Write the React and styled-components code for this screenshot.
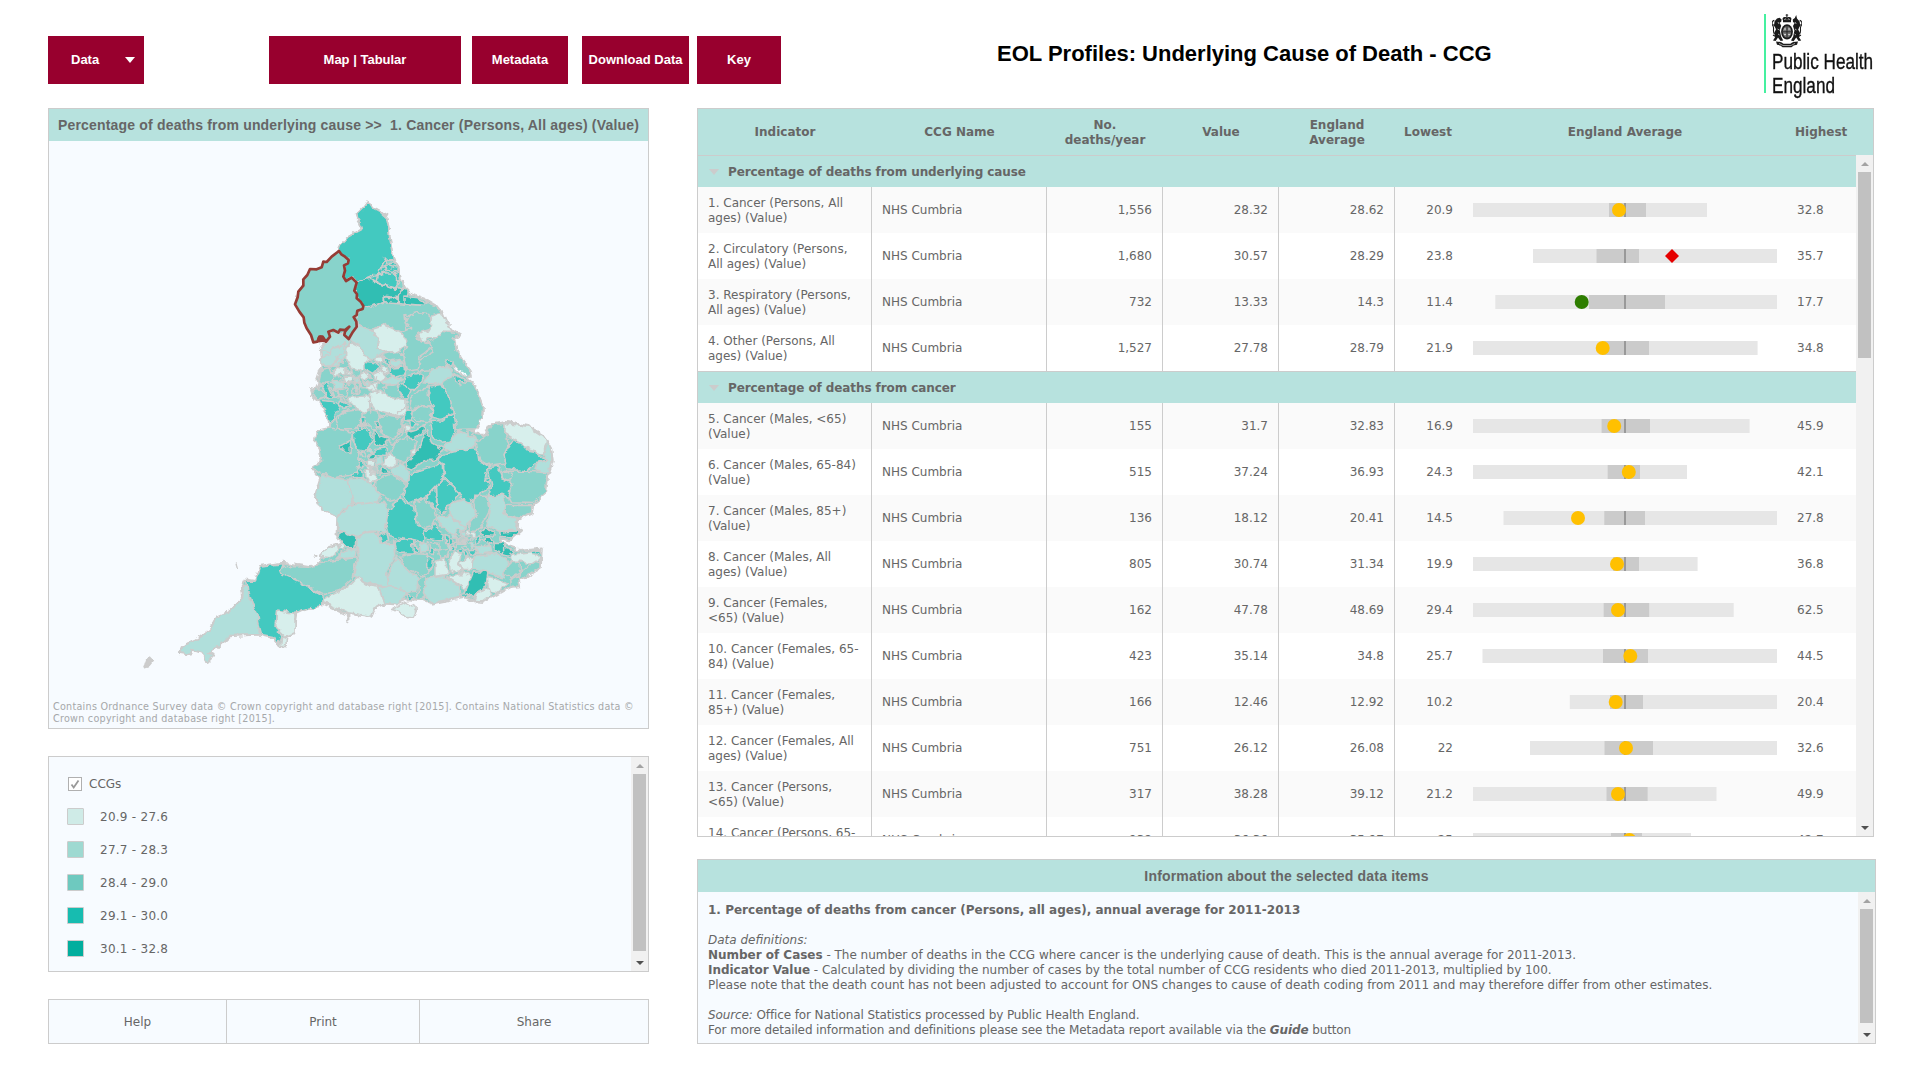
import React from "react";
import styled, { createGlobalStyle } from "styled-components";

const LINE = "#cccccc";
const TEAL = "#b7e2de";
const PALE = "#f7fbff";
const INK = "#666666";

const Global = createGlobalStyle`
  * { box-sizing: border-box; }
  html, body { margin: 0; background: #fff; }
  body {
    font-family: "DejaVu Sans", Verdana, sans-serif;
    font-size: 12px;
    line-height: 15px;
    color: ${INK};
    overflow: hidden;
  }
`;

const Page = styled.div`
  width: 1920px;
  height: 1080px;
  padding: 0 44px 0 48px;
  overflow: hidden;
`;

const TopBar = styled.header`
  display: flex;
  height: 108px;
`;

const Button = styled.button`
  display: flex;
  flex: none;
  align-items: center;
  justify-content: ${(p) => (p.$menu ? "space-between" : "center")};
  width: ${(p) => p.$w}px;
  height: 48px;
  margin: 36px 0 0 ${(p) => p.$gap || 0}px;
  padding: ${(p) => (p.$menu ? "0 9px 0 23px" : "0")};
  border: 0;
  background: #98002e;
  color: #fff;
  font: bold 13px/16px "Liberation Sans", Arial, sans-serif;
  white-space: nowrap;
`;

const Caret = styled.span`
  border: solid transparent;
  border-width: 6px 5.5px 0;
  border-top-color: ${(p) => p.$color || "#fff"};
`;

const Title = styled.h1`
  flex: none;
  margin: 42px 0 0 216px;
  width: 496px;
  font: bold 22px/24px "Liberation Sans", Arial, sans-serif;
  color: #000;
  white-space: nowrap;
`;

const Logo = styled.div`
  flex: none;
  width: 110px;
  height: 79px;
  margin: 14px 0 0 271px;
  padding-left: 6px;
  border-left: 2px solid #45f0a0;
  color: #111;
`;

const LogoText = styled.div`
  width: 128px;
  margin-top: 2px;
  font: 22px/24px "Liberation Sans", Arial, sans-serif;
  -webkit-text-stroke: 0.35px #111;
  transform: scaleX(0.78);
  transform-origin: 0 0;
  white-space: nowrap;
`;

const Columns = styled.main`
  display: grid;
  grid-template-columns: 601px 1179px;
  column-gap: 48px;
`;

const Column = styled.div`
  display: flex;
  flex-direction: column;
`;

const Panel = styled.section`
  display: flex;
  flex-direction: column;
  width: ${(p) => p.$w}px;
  height: ${(p) => p.$h}px;
  margin-bottom: ${(p) => p.$gap || 0}px;
  border: 1px solid ${LINE};
  background: ${(p) => p.$bg || PALE};
  overflow: hidden;
`;

const PanelHead = styled.h2`
  flex: none;
  height: 32px;
  margin: 0;
  background: ${TEAL};
  font: bold 14px/33px "Liberation Sans", Arial, sans-serif;
  letter-spacing: 0.18px;
  text-align: center;
  white-space: pre;
`;

const MapArea = styled.div`
  flex: 1;
  svg { display: block; }
`;

const Credit = styled.p`
  margin: 0 0 3px 4px;
  font-size: 9.6px;
  line-height: 12px;
  letter-spacing: 0.265px;
  color: #a6a8aa;
  white-space: pre;
`;

const Scroller = styled.div`
  display: flex;
  flex: 1;
  min-height: 0;
`;

const ScrollBody = styled.div`
  flex: 1;
  min-width: 0;
  overflow: hidden;
`;

const Track = styled.div`
  display: flex;
  flex-direction: column;
  align-items: center;
  flex: none;
  width: 17px;
  background: #f1f1f1;
`;

const Arrow = styled.i`
  flex: none;
  height: 17px;
  display: flex;
  align-items: center;
  &::before {
    content: "";
    border: solid transparent;
    border-width: ${(p) => (p.$down ? "4px 4px 0" : "0 4px 4px")};
    ${(p) => (p.$down ? "border-top-color: #505050" : "border-bottom-color: #a3a3a3")};
  }
`;

const Thumb = styled.div`
  flex: none;
  width: 13px;
  height: ${(p) => p.$h}px;
  background: #c1c1c1;
`;

const Spacer = styled.div`
  flex: 1;
`;

const LegendHead = styled.div`
  display: flex;
  align-items: center;
  height: 14px;
  margin: 20px 0 17px 19px;
  gap: 7px;
  svg { display: block; }
`;

const LegendList = styled.div`
  display: flex;
  flex-direction: column;
  gap: 16px;
  padding-left: 18px;
`;

const LegendItem = styled.div`
  display: flex;
  align-items: center;
  height: 17px;
  gap: 16px;
  line-height: 17px;
  letter-spacing: 0.26px;
`;

const Range = styled.span`
  padding-top: 2px;
`;

const Swatch = styled.span`
  width: 17px;
  height: 17px;
  border: 1px solid ${LINE};
  border-radius: 1px;
  background: ${(p) => p.$color};
`;

const Actions = styled.nav`
  display: grid;
  grid-template-columns: 177px 193px 229px;
  height: 45px;
  border: 1px solid ${LINE};
  background: ${PALE};
`;

const Action = styled.a`
  padding-top: 1px;
  line-height: 42px;
  text-align: center;
  border-left: ${(p) => (p.$first ? "0" : `1px solid ${LINE}`)};
`;

const GRID = "174px 175px 116px 116px 116px 78px 304px 1fr";

const HeadRow = styled.div`
  display: grid;
  grid-template-columns: ${GRID};
  align-items: center;
  flex: none;
  height: 46px;
  padding-top: 1px;
  background: ${TEAL};
  font-weight: bold;
  text-align: center;
`;

const HeadCell = styled.div`
  padding: ${(p) => p.$pad || "0"};
  text-align: ${(p) => p.$align || "center"};
`;

const GroupRow = styled.div`
  display: flex;
  align-items: center;
  gap: 9px;
  height: 32px;
  padding: 1px 0 0 11px;
  border-top: 1px solid ${LINE};
  background: ${TEAL};
  font-weight: bold;
  letter-spacing: -0.09px;
`;

const Row = styled.div`
  display: grid;
  grid-template-columns: ${GRID};
  height: 46px;
  background: ${(p) => (p.$odd ? "#fafafa" : "#ffffff")};
`;

const Cell = styled.div`
  display: flex;
  align-items: center;
  justify-content: ${(p) => (p.$right ? "flex-end" : "flex-start")};
  padding: ${(p) => (p.$two ? 2 : 0)}px ${(p) => (p.$line ? 10 : 20)}px 0 ${(p) => p.$left || 10}px;
  border-right: ${(p) => (p.$line ? `1px solid ${LINE}` : "0")};
  white-space: pre;
`;

const BarCell = styled.div`
  display: flex;
  align-items: center;
  svg { display: block; overflow: visible; }
`;

const Info = styled.div`
  padding: 11px 0 0 10px;
  white-space: pre;
`;

const InfoLine = styled.p`
  margin: 0 0 ${(p) => (p.$after ? 15 : 0)}px;
  letter-spacing: ${(p) => p.$track || 0}px;
`;

/* ---------- map ---------- */

const C = { 1: "#d7efec", 2: "#b0dfdb", 3: "#88d3cb", 4: "#43c9c0", 5: "#31beb3" };

const LAND =
  "715,65 728,85 750,97 758,110 775,103 768,115 775,140 780,180 788,230 805,262 812,295 825,325 845,345 890,362 920,380 938,402 950,430 970,452 990,465 972,475 978,510 1000,545 1022,575 1025,590 1010,596 1030,612 1045,645 1058,680 1058,710 1042,740 1030,755 1042,765 1062,766 1075,740 1085,735 1130,728 1195,740 1240,768 1262,805 1268,845 1255,885 1248,940 1210,972 1205,1000 1165,1018 1163,1050 1178,1048 1140,1082 1110,1076 1120,1092 1150,1102 1165,1115 1235,1107 1232,1165 1165,1205 1170,1220 1140,1222 1100,1245 1060,1267 1035,1265 1000,1252 905,1272 880,1262 850,1260 825,1260 800,1275 765,1272 735,1285 725,1310 655,1300 655,1325 650,1305 580,1272 500,1295 495,1325 492,1360 465,1375 468,1397 450,1397 430,1375 385,1365 300,1370 260,1405 235,1420 252,1428 230,1450 215,1420 185,1410 180,1425 150,1420 155,1400 200,1380 240,1350 265,1310 300,1295 340,1255 335,1220 345,1200 375,1205 390,1160 460,1150 540,1163 570,1150 575,1130 600,1100 635,1090 620,1070 622,1010 575,990 555,950 570,900 545,867 575,845 570,810 555,780 560,755 600,745 600,735 590,705 565,665 545,650 541,626 560,630 570,610 560,605 575,560 570,510 590,480 560,487 500,373 520,300 575,262 627,215 633,195 655,172 695,150 685,120 680,105 700,85";

const NORTH = [
  [4, "715,65 728,85 750,97 770,115 775,140 780,180 790,238 765,240 750,265 742,290 715,292 685,308 665,292 650,303 640,290 642,255 655,240 627,212 633,195 655,172 695,150 685,120 680,105 700,85"],
  [4, "765,240 788,238 800,255 812,290 805,310 798,328 765,318 735,305 720,292 742,285 752,262"],
  [3, "762,240 786,240 792,250 770,254"],
  [4, "752,264 778,258 800,266 804,276 778,270 760,278"],
  [4, "742,288 770,280 790,282 800,300 798,326 765,316 738,304"],
  [4, "790,278 808,282 812,300 803,306"],
  [5, "680,310 700,300 720,296 735,308 765,318 798,330 820,320 815,345 795,355 765,350 762,368 740,378 700,385 690,365 678,345"],
  [5, "762,352 780,355 800,350 805,378 765,372"],
  [5, "805,350 820,325 835,335 825,375 805,378"],
  [5, "825,350 860,355 885,370 880,378 825,372"],
  [3, "700,385 765,370 880,378 885,365 920,380 935,402 905,412 880,400 850,402 835,410 825,405 830,450 815,458 765,435 725,450 685,438 680,405"],
  [3, "835,410 860,400 900,402 905,445 860,460 865,480 890,490 910,500 870,530 865,570 830,575 820,530 830,490 815,458 845,445 825,430"],
  [1, "905,410 935,402 950,430 970,455 940,455 925,475 895,475 885,490 870,480 862,462 900,450"],
  [3, "890,490 920,475 940,455 990,465 972,475 978,510 1000,545 1022,575 1025,590 1000,590 975,560 960,545 948,560 905,570 865,575 870,540 912,518 905,495"],
  [4, "946,556 955,540 967,548 962,560"],
  [2, "685,440 725,450 745,480 740,505 765,518 735,535 715,545 690,500 665,485 660,470"],
  [1, "725,450 765,437 795,450 815,462 832,495 805,515 765,518 740,505 745,480"],
  [2, "600,460 640,460 660,485 650,510 645,540 620,560 575,560 570,515 595,480"],
  [2, "572,512 600,520 615,505 645,490 640,520 615,535 620,548 600,560 575,555"],
  [1, "665,490 690,502 715,545 705,572 685,575 665,565 650,540 650,510"],
  [3, "752,525 800,515 818,525 822,560 780,565 765,540"],
  [2, "778,545 805,540 820,550 805,560 785,558"],
  [4, "705,545 735,550 752,565 735,575 728,582 705,568"],
  [4, "782,566 826,562 826,585 800,592 780,585"],
  [4, "765,534 778,540 776,555 768,550"],
  [1, "735,535 760,530 762,545 742,552"],
  [1, "753,553 772,562 775,585 758,578"],
  [1, "728,585 752,573 775,595 755,608 733,600"],
  [2, "752,607 790,592 820,600 800,615 770,618"],
  [4, "825,590 875,580 878,600 858,630 835,630 822,615"],
  [2, "878,610 905,570 950,560 968,572 975,585 945,600 935,615 895,612"],
  [3, "975,585 1010,605 1030,612 1045,645 1058,680 1055,720 1040,748 980,750 972,700 960,660 938,615 945,600"],
  [4, "972,585 1000,598 1005,608 988,605 990,622 978,610"],
  [4, "895,620 935,615 960,660 970,700 930,720 905,712 910,680 895,660 900,640"],
  [3, "840,660 870,630 895,625 895,655 905,680 870,678 845,690 838,675"],
  [3, "850,690 870,680 905,685 905,715 890,727 860,722 848,712"],
  [4, "803,620 822,615 840,632 830,658 815,645"],
  [3, "755,625 800,615 815,650 800,660 770,650"],
  [1, "722,640 740,630 780,655 828,660 828,685 800,708 770,700 735,690 720,670"],
  [1, "650,655 680,650 718,645 720,690 700,705 675,680 655,668"],
  [1, "800,705 812,688 832,680 835,700 810,710"],
  [4, "822,700 840,692 848,712 835,728 820,722"],
  [3, "615,720 640,697 690,690 700,705 695,725 675,748 625,748"],
  [4, "565,662 600,665 632,672 610,720 600,735 590,705"],
  [4, "632,658 662,680 640,690 628,675"],
  [3, "541,626 575,630 590,650 562,660"],
  [4, "570,612 590,615 602,640 612,655 595,655 582,630"],
  [3, "602,625 622,635 628,655 612,652"],
  [3, "575,570 600,565 610,590 610,612 565,610"],
  [1, "605,580 625,560 645,565 645,585 612,588"],
  [1, "645,565 665,570 668,586 650,584"],
  [1, "642,590 665,590 665,605 645,605"],
  [1, "688,585 710,575 720,590 700,605"],
  [2, "610,603 640,605 640,625 615,630"],
  [3, "625,632 655,625 650,650 630,648"],
  [3, "665,628 680,612 692,615 690,640 665,645"],
  [3, "698,602 720,592 732,605 702,612"],
  [1, "700,625 722,618 745,610 740,630 715,635"],
  [2, "670,590 688,590 692,608 672,610"],
  [3, "692,705 720,690 745,695 752,745 735,750 720,735 705,740"],
  [4, "692,715 704,712 706,735 692,738"],
  [3, "755,712 800,708 820,720 815,760 790,795 765,770 752,748"],
];

const SOUTH = [
  [4, "900,62 935,65 970,38 975,90 965,125 935,128 910,110"],
  [4, "835,62 865,75 845,85 838,78"],
  [1, "820,75 840,80 845,98 825,95"],
  [3, "785,155 800,125 830,112 862,122 855,150 835,170 825,190 790,180"],
  [5, "830,100 862,90 888,72 880,100 850,118 830,115"],
  [5, "832,190 860,158 890,95 905,130 940,150 915,182 885,182 845,212 828,205"],
  [1, "840,155 856,148 857,165 843,168"],
  [2, "940,145 965,120 985,92 1010,105 1035,110 1042,130 1020,150 960,155"],
  [3, "1010,95 1030,92 1022,112 1012,110"],
  [3, "1065,110 1085,75 1125,72 1125,105 1140,130 1125,160 1130,190 1075,198 1055,185 1040,150 1035,130"],
  [1, "1125,72 1195,80 1240,108 1255,125 1240,165 1200,152 1150,120 1125,105"],
  [2, "1240,165 1250,125 1265,150 1265,185 1255,222 1215,210 1220,190 1250,182"],
  [4, "1150,120 1175,135 1195,155 1220,160 1250,182 1215,190 1190,215 1130,208 1122,165 1140,135"],
  [4, "920,178 960,155 1030,148 1045,155 1050,185 1075,200 1065,240 1080,265 1050,280 1045,295 1020,308 1000,302 990,280 945,235 940,200"],
  [4, "1075,205 1105,200 1115,225 1145,240 1140,300 1115,285 1075,290 1085,260"],
  [4, "1065,240 1075,235 1082,245 1072,252"],
  [3, "1145,250 1115,238 1118,215 1195,215 1250,220 1248,280 1210,312 1145,310 1135,290"],
  [3, "1118,220 1140,215 1150,232 1140,242 1120,236"],
  [3, "1125,318 1205,318 1205,340 1160,358 1125,345"],
  [2, "1075,290 1115,285 1125,315 1125,345 1163,360 1160,392 1110,395 1070,380 1080,340"],
  [3, "1035,290 1070,290 1078,335 1060,370 1040,395 1018,395 1020,370 1040,345 1030,310"],
  [2, "960,312 1000,300 1020,308 1040,345 1020,370 1005,385 975,370 960,340"],
  [2, "918,355 960,345 990,375 1010,385 985,402 955,400 935,380"],
  [4, "835,235 860,215 935,192 942,235 890,290 835,312 822,290"],
  [4, "890,290 918,262 920,330 900,310"],
  [4, "920,262 940,238 990,285 960,312 935,345 922,330"],
  [4, "770,345 810,292 825,312 850,320 860,375 885,390 880,430 830,420 780,412 768,370"],
  [3, "855,310 880,295 915,330 920,350 905,380 880,388 860,360"],
  [4, "882,395 905,388 915,370 940,405 935,425 885,415"],
  [3, "738,240 780,225 825,250 825,280 800,300 780,305 735,270"],
  [2, "780,210 810,190 838,220 832,250 785,222"],
  [1, "765,178 780,160 802,188 780,205 760,200"],
  [5, "750,210 762,205 777,220 750,224"],
  [1, "705,210 735,218 738,240 722,252 708,232"],
  [1, "712,182 735,182 733,198 712,198"],
  [2, "738,178 755,170 758,195 740,200"],
  [5, "715,170 735,158 738,175 720,180"],
  [4, "735,150 772,145 772,168 735,165"],
  [4, "682,180 695,185 698,205 685,208"],
  [4, "665,225 680,210 700,218 700,230 668,232"],
  [3, "560,95 600,85 670,98 668,125 690,160 680,220 660,228 610,235 575,225 545,205 575,185 570,150 555,120"],
  [5, "630,140 662,122 660,162 645,158"],
  [4, "670,98 700,85 722,95 725,125 705,155 690,152 672,130"],
  [4, "692,52 706,56 705,78 695,74"],
  [3, "750,55 770,45 815,55 812,90 790,120 760,105 748,85"],
  [5, "732,88 750,110 777,120 760,140 732,130"],
  [2, "578,225 610,235 655,240 670,312 640,330 620,352 575,330 555,290"],
  [2, "655,240 700,235 725,255 755,290 745,308 690,315 670,308 660,270"],
  [2, "655,318 760,305 775,330 765,395 720,395 680,410 625,395 622,352 640,338"],
  [2, "680,415 715,398 745,402 750,430 790,432 795,470 770,520 778,560 720,555 670,528 685,480"],
  [5, "622,410 640,395 678,412 675,445 650,445"],
  [4, "748,405 770,395 776,425 755,432"],
  [4, "790,425 840,420 860,440 850,460 800,462"],
  [4, "848,430 868,452 862,462 850,455"],
  [2, "870,430 890,432 892,455 875,460"],
  [3, "895,428 930,432 930,450 900,455"],
  [4, "900,445 920,448 912,462 902,460"],
  [3, "925,455 960,448 955,470 930,478"],
  [3, "810,470 850,462 895,465 900,510 880,530 830,510"],
  [4, "893,472 907,478 905,510 893,500"],
  [2, "775,530 800,470 830,510 865,535 860,575 810,580 775,560"],
  [3, "865,540 888,532 882,600 855,600 868,575"],
  [2, "745,562 800,562 830,580 820,598 800,615 765,612"],
  [4, "828,580 848,592 850,602 835,596"],
  [2, "880,580 890,537 940,530 985,560 990,590 905,612"],
  [1, "580,598 630,575 660,555 680,535 710,555 745,560 762,612 735,625 725,650 655,640 580,610"],
  [3, "445,500 540,503 570,490 620,482 680,475 665,540 630,572 580,585 520,552 450,520"],
  [2, "618,478 645,452 680,445 675,475"],
  [1, "570,470 600,440 622,435 628,455 600,475"],
  [1, "625,432 640,432 642,448 630,448"],
  [4, "345,545 375,545 390,500 460,493 450,520 520,552 580,592 578,618 520,630 495,642 440,632 435,680 457,712 447,735 430,712 395,705 380,650"],
  [1, "440,632 495,642 495,700 465,712 437,682"],
  [1, "455,712 470,718 466,738 452,737"],
  [2, "340,560 355,562 358,600 385,650 388,705 300,708 260,745 235,760 252,768 230,790 215,760 185,750 180,765 150,760 155,740 200,720 240,690 265,650 300,635 338,595"],
  [1, "915,485 945,475 955,525 915,530"],
  [1, "958,480 972,455 992,470 985,495 1000,512 960,520"],
  [1, "988,492 1010,472 1028,475 1025,510 1000,510"],
  [2, "1030,472 1100,462 1140,485 1120,535 1060,515 1025,505"],
  [2, "1035,440 1080,435 1085,460 1040,465"],
  [5, "1095,428 1125,430 1120,462 1095,455"],
  [5, "1118,442 1155,455 1140,472 1118,465"],
  [1, "1140,465 1215,455 1230,480 1205,495 1170,485 1145,485"],
  [4, "1205,452 1235,450 1232,462 1208,460"],
  [3, "1118,520 1145,488 1170,490 1172,520 1140,538"],
  [3, "1172,520 1205,492 1215,485 1230,490 1230,505 1165,545"],
  [3, "1142,540 1165,530 1170,560 1145,560"],
  [1, "950,532 1015,518 1025,540 1008,572 985,555"],
  [1, "1072,530 1135,550 1100,580 1075,572"],
  [5, "1030,518 1074,516 1067,562 1042,577 1032,598 1005,580"],
  [4, "990,585 1010,582 1018,592 1000,590"],
  [1, "1042,580 1078,565 1085,585 1060,605 1035,602"],
  [5, "1105,398 1172,394 1150,412 1110,410"],
  [5, "1050,395 1062,385 1095,398 1092,410 1060,408"],
  [5, "1055,425 1075,412 1092,425 1088,434"],
  [4, "1035,420 1048,405 1052,425 1038,435"],
  [4, "1015,450 1040,450 1030,470"],
  [4, "945,405 958,410 955,438 947,435"],
];

const LONDON = [
  [4, 962, 428], [2, 972, 412], [3, 985, 400], [2, 1000, 405], [1, 1030, 408], [3, 985, 425],
  [2, 1003, 428], [4, 968, 448], [3, 1018, 418], [2, 1024, 438], [4, 988, 456], [3, 1006, 448],
  [3, 975, 436], [1, 1014, 400], [4, 1008, 464], [2, 958, 445],
];

const MIDS = [
  [3, 700, 825], [5, 742, 733], [2, 720, 815], [3, 705, 850], [1, 715, 865], [4, 690, 745],
  [3, 650, 612], [2, 678, 630], [3, 655, 570], [2, 712, 612],
];

const GREY_KNOTS = [
  "980,420 995,408 1012,418 1008,434 988,434",
  "985,515 1000,512 998,526 986,526",
  "718,202 742,198 744,222 720,224",
];

const ROUGH_LINES = [
  "600,560 620,540 640,548 645,530",
  "575,535 600,525 605,508 640,500",
  "655,545 665,560 660,590 680,600",
  "620,588 640,600 660,610 690,612 700,630",
  "690,570 690,590 675,600 670,625",
  "740,590 730,620 745,640",
  "815,655 830,660 838,640",
  "610,655 640,655 650,668",
  "720,640 722,700",
  "795,240 800,262 808,275",
  "770,240 765,262 775,275",
];

const CUMBRIA =
  "627,213 634,223 645,230 656,240 654,250 642,256 645,272 640,290 648,303 665,293 680,308 673,332 681,343 680,355 692,365 700,378 698,387 682,392 680,405 671,411 679,425 680,440 669,455 656,477 643,465 645,455 658,440 645,450 630,449 625,458 610,450 595,455 600,470 588,485 578,470 568,470 562,485 550,487 543,465 530,445 523,428 521,412 508,395 495,373 503,352 505,335 520,317 520,298 532,285 540,267 560,268 575,262 580,245 590,246 605,230";

function Shapes({ list }) {
  return list.map(([c, pts], i) => <polygon key={i} points={pts} fill={C[c]} />);
}

function Bits({ list }) {
  return list.map(([c, x, y], i) => (
    <polygon
      key={i}
      points={`${x - 8},${y - 5} ${x + 2},${y - 8} ${x + 9},${y + 2} ${x},${y + 8}`}
      fill={C[c]}
    />
  ));
}

function EnglandMap() {
  return (
    <svg width="599" height="554" viewBox="49 141 599 554">
      <defs>
        <filter id="coast" x="-5%" y="-5%" width="110%" height="110%" colorInterpolationFilters="sRGB">
          <feTurbulence type="fractalNoise" baseFrequency="0.16" numOctaves="2" seed="7" />
          <feDisplacementMap in="SourceGraphic" scale="6" xChannelSelector="R" yChannelSelector="G" />
        </filter>
      </defs>
      <g filter="url(#coast)">
        <g transform="translate(130 179.500) scale(0.33333)" stroke={LINE} strokeWidth="4.6" strokeLinejoin="round">
          <polygon points={LAND} fill={C[3]} strokeWidth="6.5" />
          <Shapes list={NORTH} />
          <Bits list={MIDS} />
          <g transform="translate(0 660)">
            <Shapes list={SOUTH} />
            <g strokeWidth="3.6">
              <Bits list={LONDON} />
            </g>
            {GREY_KNOTS.map((p) => (
              <polygon key={p} points={p} fill={LINE} fillOpacity="0.75" />
            ))}
            <polygon points="785,630 830,608 862,625 850,650 830,652 805,635" fill={C[1]} />
            <polygon points="45,795 50,780 62,773 70,782 58,797 42,802" fill={LINE} />
            <path d="M320 495l3 10M556 468l3 1" strokeWidth="7" strokeLinecap="round" />
          </g>
          {ROUGH_LINES.map((p) => (
            <polyline key={p} points={p} fill="none" />
          ))}
          <path d="M968 560l20 22 22 12 14 -2" fill="none" strokeWidth="5" />
          <path d="M976 564l14 14 18 10" fill="none" stroke={PALE} strokeWidth="4" />
        </g>
      </g>
      <g transform="translate(130 180) scale(0.33333)">
        <polygon points={CUMBRIA} fill={C[3]} stroke="#963c35" strokeWidth="8" strokeLinejoin="round" />
        <polygon points="560,487 563,472 572,466 582,472 590,486" fill="#963c35" />
      </g>
    </svg>
  );
}

/* ---------- logo ---------- */

const CrestArt = styled.svg`
  display: block;
`;

function Crest() {
  return (
    <CrestArt width="30" height="34" viewBox="0 0 30 34" fill="#1b1b1b">
      <path d="M11 6.500C9.500 3.500 12 2.200 14.400 3.400V1.600h-.8V.8h.8V0h1v.8h.8v.8h-.8v1.800C18 2.200 20.500 3.500 19 6.500v1.700h-8z" />
      <path d="M12.300 5.600q1-1.300 2 0M15.700 5.600q1-1.300 2 0" stroke="#fff" strokeWidth=".7" fill="none" />
      <ellipse cx="15" cy="17.800" rx="5.900" ry="7.600" />
      <ellipse cx="15" cy="17.800" rx="4.300" ry="5.800" fill="#777" />
      <path d="M15 12v11.600M10.700 17.800h8.600" stroke="#1b1b1b" strokeWidth=".8" />
      <path d="M12 15h2M16.200 15h2M12 20.600h2M16.200 20.600h2" stroke="#ddd" strokeWidth="1" />
      <path d="M5 4.500l2.600-.7 2 1.700-.4 2.300-1.600 1 1.600 3-1.400 4.500 1.200 6 2.200 4.200-2.600.6-2.600-3.600-2.400 3.400-2.600-.4 2.200-3.400-1-4.200 1.800-3.600-2-4 .6-4z" />
      <path d="M2.500 20C.2 17 2.600 14.500 1 12s-1-5 1.300-5.600M4 12.500l-2.600-2M3.600 22.500L1 21" stroke="#1b1b1b" strokeWidth="1.100" fill="none" />
      <path d="M25 4.500L24.200 1l-1.400 3-2 1.500.2 2.600 1.600.8-1.600 3 1.400 4.500-1.200 6-2.200 4.200 2.600.6 2.600-3.600 2.400 3.400 2.600-.4-2.200-3.400 1-4.200-1.800-3.600 2-4-.6-4z" />
      <path d="M27.500 20c2.300-3-.1-5.500 1.500-8s1-5-1.300-5.600M26 12.500l2.600-2M26.400 22.500L29 21" stroke="#1b1b1b" strokeWidth="1.100" fill="none" />
      <path d="M6 8l1 2M5.500 15l2 1M6 20l1.600 1M23 8l1.200 2M23 15l1.600 1M22.600 20l1.400 1" stroke="#ccc" strokeWidth=".8" />
      <path d="M4 27.500q5.500 0 7.500 2.200h7q2-2.200 7.500-2.200l-1 3.300q-4 .2-5.500 2.400h-9q-1.500-2.200-5.500-2.400z" />
      <path d="M7 29.400l4 2.100h8l4-2.100" stroke="#bbb" strokeWidth=".8" fill="none" />
    </CrestArt>
  );
}

/* ---------- data ---------- */

const GROUPS = [
  {
    name: "Percentage of deaths from underlying cause",
    rows: [
      { label: "1. Cancer (Persons, All\nages) (Value)", v: ["1,556", "28.32", "28.62", "20.9", "32.8"], bar: [0, 234, 136, 173, 146] },
      { label: "2. Circulatory (Persons,\nAll ages) (Value)", v: ["1,680", "30.57", "28.29", "23.8", "35.7"], bar: [60, 304, 123.5, 166, 199], mark: "high" },
      { label: "3. Respiratory (Persons,\nAll ages) (Value)", v: ["732", "13.33", "14.3", "11.4", "17.7"], bar: [22.3, 304, 116, 192, 108.7], mark: "low" },
      { label: "4. Other (Persons, All\nages) (Value)", v: ["1,527", "27.78", "28.79", "21.9", "34.8"], bar: [0, 284.6, 130, 176, 129.7] },
    ],
  },
  {
    name: "Percentage of deaths from cancer",
    rows: [
      { label: "5. Cancer (Males, <65)\n(Value)", v: ["155", "31.7", "32.83", "16.9", "45.9"], bar: [0, 276.6, 128.6, 177, 141.2] },
      { label: "6. Cancer (Males, 65-84)\n(Value)", v: ["515", "37.24", "36.93", "24.3", "42.1"], bar: [0, 214, 134.7, 167, 155.8] },
      { label: "7. Cancer (Males, 85+)\n(Value)", v: ["136", "18.12", "20.41", "14.5", "27.8"], bar: [30.5, 304, 131.3, 172, 105] },
      { label: "8. Cancer (Males, All\nages) (Value)", v: ["805", "30.74", "31.34", "19.9", "36.8"], bar: [0, 224.6, 140, 166, 144] },
      { label: "9. Cancer (Females,\n<65) (Value)", v: ["162", "47.78", "48.69", "29.4", "62.5"], bar: [0, 260.7, 130.7, 176.2, 145] },
      { label: "10. Cancer (Females, 65-\n84) (Value)", v: ["423", "35.14", "34.8", "25.7", "44.5"], bar: [9.5, 304, 130, 175, 157.3] },
      { label: "11. Cancer (Females,\n85+) (Value)", v: ["166", "12.46", "12.92", "10.2", "20.4"], bar: [96.8, 304, 137, 170, 142.7] },
      { label: "12. Cancer (Females, All\nages) (Value)", v: ["751", "26.12", "26.08", "22", "32.6"], bar: [57, 304, 131.5, 180, 153] },
      { label: "13. Cancer (Persons,\n<65) (Value)", v: ["317", "38.28", "39.12", "21.2", "49.9"], bar: [0, 243.5, 133.5, 174.6, 145] },
      { label: "14. Cancer (Persons, 65-\n84) (Value)", v: ["938", "36.36", "35.97", "25", "42.7"], bar: [0, 218, 138, 169, 156.3] },
    ],
  },
];

const LEGEND = [
  ["#cfebe7", "20.9 - 27.6"],
  ["#9ed9d1", "27.7 - 28.3"],
  ["#6ec9bf", "28.4 - 29.0"],
  ["#17bcb0", "29.1 - 30.0"],
  ["#02ae9e", "30.1 - 32.8"],
];

function Spine({ bar, mark }) {
  const [lo, hi, q1, q3, at] = bar;
  return (
    <svg width="304" height="14" viewBox="0 0 304 14">
      <rect x={lo} width={hi - lo} height="14" fill="#e6e6e6" />
      <rect x={q1} width={q3 - q1} height="14" fill="#cbcbcb" />
      <rect x="151" width="2" height="14" fill="#999" />
      {mark === "high" ? (
        <path d={`M${at} 0l7 7-7 7-7-7z`} fill="#e50000" />
      ) : (
        <circle cx={at} cy="7" r="7" fill={mark === "low" ? "#2e7d00" : "#ffc000"} />
      )}
    </svg>
  );
}

function ScrollTrack({ thumb }) {
  return (
    <Track>
      <Arrow />
      <Thumb $h={thumb} />
      <Spacer />
      <Arrow $down />
    </Track>
  );
}

export default function App() {
  return (
    <>
      <Global />
      <Page>
        <TopBar>
          <Button $w={96} $menu>
            Data
            <Caret />
          </Button>
          <Button $w={192} $gap={125}>Map | Tabular</Button>
          <Button $w={96} $gap={11}>Metadata</Button>
          <Button $w={107} $gap={14}>Download Data</Button>
          <Button $w={84} $gap={8}>Key</Button>
          <Title>EOL Profiles: Underlying Cause of Death - CCG</Title>
          <Logo>
            <Crest />
            <LogoText>
              Public Health
              <br />
              England
            </LogoText>
          </Logo>
        </TopBar>

        <Columns>
          <Column>
            <Panel $w={601} $h={621} $gap={27}>
              <PanelHead>{"Percentage of deaths from underlying cause >>  1. Cancer (Persons, All ages) (Value)"}</PanelHead>
              <MapArea>
                <EnglandMap />
              </MapArea>
              <Credit>
                {"Contains Ordnance Survey data © Crown copyright and database right [2015]. Contains National Statistics data ©\nCrown copyright and database right [2015]."}
              </Credit>
            </Panel>

            <Panel $w={601} $h={216} $gap={27}>
              <Scroller>
                <ScrollBody>
                  <LegendHead>
                    <svg width="14" height="14" viewBox="0 0 14 14">
                      <rect x=".5" y=".5" width="13" height="13" fill="#fff" stroke="#b0b0b0" />
                      <path d="M3.500 7.500l2.200 3 4.800-7" fill="none" stroke="#999" strokeWidth="1.800" />
                    </svg>
                    CCGs
                  </LegendHead>
                  <LegendList>
                    {LEGEND.map(([color, range]) => (
                      <LegendItem key={range}>
                        <Swatch $color={color} />
                        <Range>{range}</Range>
                      </LegendItem>
                    ))}
                  </LegendList>
                </ScrollBody>
                <ScrollTrack thumb={177} />
              </Scroller>
            </Panel>

            <Actions>
              <Action $first>Help</Action>
              <Action>Print</Action>
              <Action>Share</Action>
            </Actions>
          </Column>

          <Column>
            <Panel $w={1177} $h={729} $gap={22} $bg="#fff">
              <HeadRow>
                <HeadCell>Indicator</HeadCell>
                <HeadCell>CCG Name</HeadCell>
                <HeadCell>No.<br />deaths/year</HeadCell>
                <HeadCell>Value</HeadCell>
                <HeadCell>England<br />Average</HeadCell>
                <HeadCell $align="left" $pad="0 0 0 9px">Lowest</HeadCell>
                <HeadCell>England Average</HeadCell>
                <HeadCell $align="left" $pad="0 0 0 18px">Highest</HeadCell>
              </HeadRow>
              <Scroller>
                <ScrollBody>
                  {GROUPS.map((g) => (
                    <React.Fragment key={g.name}>
                      <GroupRow>
                        <Caret $color="#cccccc" />
                        {g.name}
                      </GroupRow>
                      {g.rows.map((r, i) => (
                        <Row key={r.label} $odd={i % 2 === 0}>
                          <Cell $line $two>{r.label}</Cell>
                          <Cell $line>NHS Cumbria</Cell>
                          <Cell $line $right>{r.v[0]}</Cell>
                          <Cell $line $right>{r.v[1]}</Cell>
                          <Cell $line $right>{r.v[2]}</Cell>
                          <Cell $right>{r.v[3]}</Cell>
                          <BarCell>
                            <Spine bar={r.bar} mark={r.mark} />
                          </BarCell>
                          <Cell $left={20}>{r.v[4]}</Cell>
                        </Row>
                      ))}
                    </React.Fragment>
                  ))}
                </ScrollBody>
                <ScrollTrack thumb={186} />
              </Scroller>
            </Panel>

            <Panel $w={1179} $h={185}>
              <PanelHead>Information about the selected data items</PanelHead>
              <Scroller>
                <ScrollBody>
                  <Info>
                    <InfoLine $after $track={0.015}><b>1. Percentage of deaths from cancer (Persons, all ages), annual average for 2011-2013</b></InfoLine>
                    <InfoLine><i>Data definitions:</i></InfoLine>
                    <InfoLine $track={-0.02}><b>Number of Cases</b> - The number of deaths in the CCG where cancer is the underlying cause of death. This is the annual average for 2011-2013.</InfoLine>
                    <InfoLine $track={-0.03}><b>Indicator Value</b> - Calculated by dividing the number of cases by the total number of CCG residents who died 2011-2013, multiplied by 100.</InfoLine>
                    <InfoLine $after $track={-0.045}>Please note that the death count has not been adjusted to account for ONS changes to cause of death coding from 2011 and may therefore differ from other estimates.</InfoLine>
                    <InfoLine $track={-0.11}><i>Source:</i> Office for National Statistics processed by Public Health England.</InfoLine>
                    <InfoLine $track={-0.105}>For more detailed information and definitions please see the Metadata report available via the <b><i>Guide</i></b> button</InfoLine>
                  </Info>
                </ScrollBody>
                <ScrollTrack thumb={114} />
              </Scroller>
            </Panel>
          </Column>
        </Columns>
      </Page>
    </>
  );
}
